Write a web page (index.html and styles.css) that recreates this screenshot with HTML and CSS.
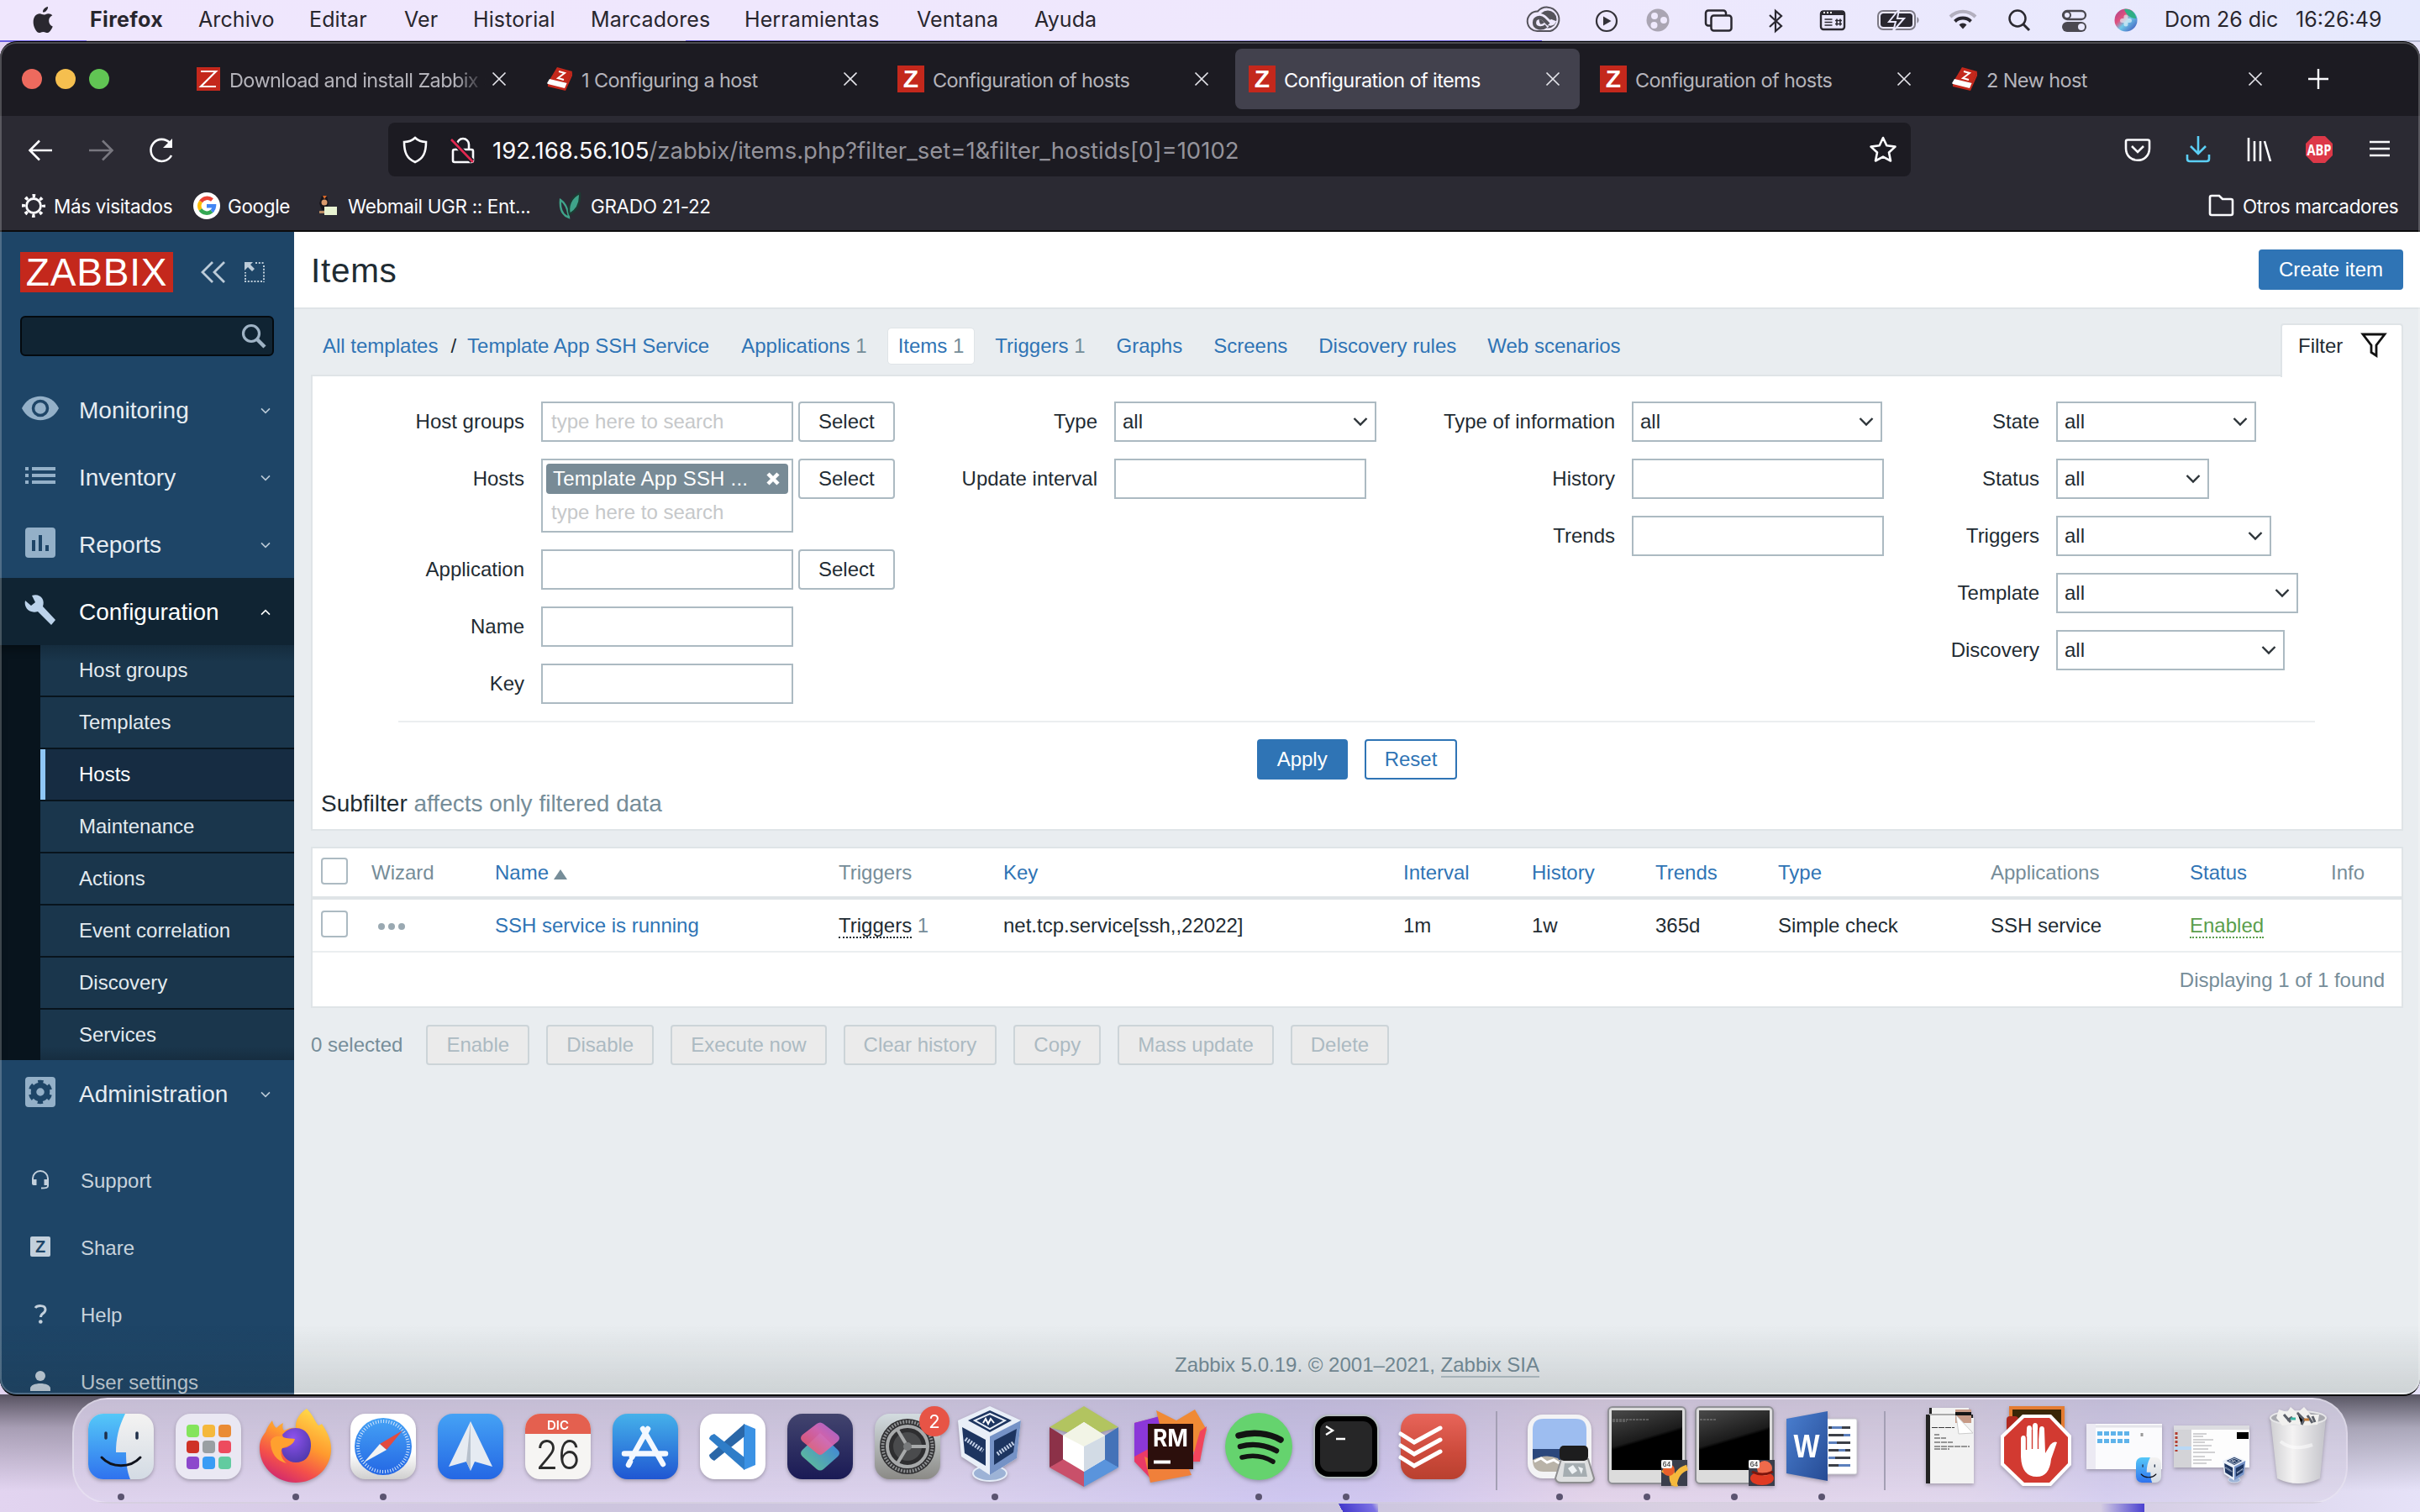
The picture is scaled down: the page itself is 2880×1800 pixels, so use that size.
FILE: index.html
```html
<!DOCTYPE html>
<html lang="es">
<head>
<meta charset="utf-8">
<title>Configuration of items</title>
<link rel="stylesheet" href="styles.css">
</head>
<body>
<svg class="defs" width="0" height="0" aria-hidden="true">
  <defs>
    <linearGradient id="gBlue" x1="0" y1="0" x2="0" y2="1"><stop offset="0" stop-color="#55c8f8"/><stop offset="1" stop-color="#2f72ee"/></linearGradient>
    <linearGradient id="gWhite" x1="0" y1="0" x2="0" y2="1"><stop offset="0" stop-color="#f4f3f2"/><stop offset="1" stop-color="#d3dbe4"/></linearGradient>
    <linearGradient id="gSky" x1="0" y1="0" x2="0" y2="1"><stop offset="0" stop-color="#45a2f5"/><stop offset="1" stop-color="#2467e4"/></linearGradient>
    <linearGradient id="gStore" x1="0" y1="0" x2="0" y2="1"><stop offset="0" stop-color="#45b1ea"/><stop offset="1" stop-color="#1f56d2"/></linearGradient>
    <linearGradient id="gSaf" x1="0" y1="0" x2="0" y2="1"><stop offset=".6" stop-color="#fff"/><stop offset="1" stop-color="#cfcfcf"/></linearGradient>
    <linearGradient id="gNight" x1="0" y1="0" x2="0" y2="1"><stop offset="0" stop-color="#42446e"/><stop offset="1" stop-color="#1a1a55"/></linearGradient>
    <linearGradient id="gSc1" x1="0" y1="1" x2="1" y2="0"><stop offset="0" stop-color="#f2555a"/><stop offset=".6" stop-color="#e069b8"/><stop offset="1" stop-color="#a76ae0"/></linearGradient>
    <linearGradient id="gSc2" x1="0" y1="1" x2="1" y2="0"><stop offset="0" stop-color="#6ad695"/><stop offset="1" stop-color="#3b82f6"/></linearGradient>
    <linearGradient id="gFox" x1=".8" y1="0" x2=".3" y2="1"><stop offset="0" stop-color="#ffe14d"/><stop offset=".45" stop-color="#ff9a2e"/><stop offset=".75" stop-color="#f4504a"/><stop offset="1" stop-color="#d0286f"/></linearGradient>
    <radialGradient id="gFoxIn" cx=".4" cy=".3" r=".8"><stop offset="0" stop-color="#8f52ee"/><stop offset="1" stop-color="#4a37a6"/></radialGradient>
    <linearGradient id="gSet" x1="0" y1="0" x2="0" y2="1"><stop offset="0" stop-color="#d3dce0"/><stop offset="1" stop-color="#8b8a86"/></linearGradient>
    <linearGradient id="gTodo" x1="0" y1="0" x2="0" y2="1"><stop offset="0" stop-color="#e8655a"/><stop offset=".6" stop-color="#cc4a3b"/><stop offset="1" stop-color="#b9402f"/></linearGradient>
    <linearGradient id="gWord" x1="0" y1="0" x2="1" y2="1"><stop offset="0" stop-color="#4a7fd0"/><stop offset="1" stop-color="#264b94"/></linearGradient>
    <linearGradient id="gTerm" x1="0" y1="0" x2=".35" y2="1"><stop offset="0" stop-color="#4a4a4a"/><stop offset=".55" stop-color="#1b1b1b"/><stop offset=".6" stop-color="#000"/></linearGradient>
    <linearGradient id="gTrash" x1="0" y1="0" x2="1" y2="0"><stop offset="0" stop-color="#cfcfd2"/><stop offset=".4" stop-color="#f4f3f3"/><stop offset="1" stop-color="#c4c4ca"/></linearGradient>
    <linearGradient id="gSiri" x1="0" y1="0" x2="1" y2="1"><stop offset="0" stop-color="#a5418b"/><stop offset=".35" stop-color="#e0507e"/><stop offset=".55" stop-color="#6ec9e8"/><stop offset="1" stop-color="#3a47b8"/></linearGradient>
  </defs>
  <symbol id="x" viewBox="0 0 20 20"><path d="M2.500 2.500 17.500 17.500M17.500 2.500 2.500 17.500" fill="none" stroke="currentColor" stroke-width="1.700"/></symbol>
  <symbol id="chev" viewBox="0 0 18 12"><path d="M1.500 2 9 9.500 16.500 2" fill="none" stroke="currentColor" stroke-width="2.400"/></symbol>
  <symbol id="zfav" viewBox="0 0 32 32"><rect width="32" height="32" fill="#c4281c"/><text x="15.500" y="26" text-anchor="middle" font-family="Liberation Sans, sans-serif" font-weight="bold" font-size="30" fill="#fff">Z</text></symbol>
  <symbol id="book" viewBox="0 0 32 32"><path d="M13 2 31 7 25 21 4 17Z" fill="#c4281c"/><path d="M4 16 25 21 26 22 22 28 4 24 1 21Z" fill="#fff"/><path d="M25 20 31 7 31 12 23 30 2 25 2 22 22 27Z" fill="#c4281c"/><path d="M15 7l7 2-8 6 7 2" fill="none" stroke="#fff" stroke-width="2"/></symbol>
  <symbol id="finder" viewBox="0 0 78 78"><rect width="78" height="78" rx="18" fill="url(#gWhite)"/><path d="M18 0h26c-8 16-11 30-11 46h12c0 12 1 22 5 32H18A18 18 0 0 1 0 60V18A18 18 0 0 1 18 0Z" fill="url(#gBlue)"/><path d="M21 23v6M58 23v6" stroke="#20304a" stroke-width="3.500" stroke-linecap="round"/><path d="M16 52c12 13 34 13 46 0" fill="none" stroke="#10131c" stroke-width="3" stroke-linecap="round"/></symbol>
  <symbol id="vbox" viewBox="0 0 76 92"><ellipse cx="38" cy="80" rx="20" ry="9" fill="#9db3d6" stroke="#e5ecf7" stroke-width="2"/><path d="M38 0 75 17 70 62 38 82 4 60 0 17Z" fill="#e9eff8"/><path d="M75 17 38 36V82L70 62Z" fill="#7592c6"/><path d="M38 5 64 17 38 31 12 17Z" fill="#1d3560"/><path d="M38 9 56 17 38 27 20 17Z" fill="none" stroke="#e9eff8" stroke-width="2"/><path d="M30 20l3-5 3 6 3-6 4 5" fill="none" stroke="#fff" stroke-width="2"/><path d="M5 25 33 40V71L8 56Z" fill="#1d3560"/><path d="M43 41 70 27 66 55 43 70Z" fill="#1d3560"/><path d="M9 39 30 53M47 57 66 44" stroke="#c5d2e8" stroke-width="5" stroke-dasharray="2 1.500"/></symbol>
</svg>

<header class="menubar">
  <svg class="apple" viewBox="0 0 30 36"><path d="M20.500 1c.3 3.800-3.200 7.500-6.600 7.300C13.500 4.900 17 1.300 20.500 1ZM26.300 12.200c-3 1.800-4.700 4-4.600 7.300.1 3.300 2 5.800 5 7.100-1.500 4-4.400 8.400-7.200 8.400-1.900 0-2.700-1.200-5.100-1.200S11 35 9.300 35C5.500 35 1.500 27.300 1.500 21c0-7 4-10.900 8.200-10.900 2.200 0 3.800 1.400 5.600 1.400 1.700 0 3.200-1.500 5.800-1.500 2 0 4 .9 5.200 2.200Z" fill="#2a2830"/></svg>
  <nav class="menus"><b>Firefox</b><span>Archivo</span><span>Editar</span><span>Ver</span><span>Historial</span><span>Marcadores</span><span>Herramientas</span><span>Ventana</span><span>Ayuda</span></nav>
  <div class="tray">
    <svg width="74" height="48" viewBox="0 0 74 48"><path d="M30 13.500A14.500 14.500 0 1 1 45 37H31A11.800 11.800 0 1 1 30 13.500Z" fill="none" stroke="#55535b" stroke-width="2"/><circle cx="42" cy="23" r="10.500" fill="#55535b"/><path d="M41 29c-5 5-15 5-15-3 0-6 7-9 12-4l4 4q5 3 7-2" fill="none" stroke="#efe9fd" stroke-width="7"/><path d="M40 31c-5 4-14 3-14-4 0-6 7-8 11-4l6 6" fill="none" stroke="#55535b" stroke-width="4.200"/></svg>
    <svg width="68" height="48" viewBox="0 0 68 48"><circle cx="38" cy="25" r="12" fill="none" stroke="#333138" stroke-width="2.200"/><path d="M34 19.500 43.500 25 34 30.500Z" fill="#333138"/></svg>
    <svg width="66" height="48" viewBox="0 0 66 48"><circle cx="31" cy="24" r="13.500" fill="#aaa5b3"/><circle cx="27" cy="19" r="4" fill="#efe9fd"/><circle cx="38" cy="24" r="4" fill="#efe9fd"/><circle cx="26.500" cy="30" r="4" fill="#efe9fd"/></svg>
    <svg width="72" height="48" viewBox="0 0 72 48" fill="#ede9fd" stroke="#2a2830" stroke-width="2.500"><rect x="22" y="12.500" width="24" height="18" rx="3"/><rect x="28.500" y="18.500" width="24" height="18" rx="3"/></svg>
    <svg width="68" height="48" viewBox="0 0 68 48" fill="none" stroke="#2a2830" stroke-width="2.200"><path d="M26 18 40 31 33 37V13L40 19 26 32"/></svg>
    <svg width="74" height="48" viewBox="0 0 74 48"><rect x="19" y="13.500" width="28" height="21.500" rx="3" fill="none" stroke="#2a2830" stroke-width="2.400"/><path d="M19 13h28v5H19Z" fill="#2a2830"/><path d="M22 15h11" stroke="#fff" stroke-width="2" stroke-dasharray="2 2"/><path d="M23.500 23h9M23.500 26.500h9M23.500 30h9M36 24.500h8M36 28.500h8M38 22.500v8M42 22.500v8" stroke="#2a2830" stroke-width="1.600"/></svg>
    <svg width="80" height="48" viewBox="0 0 80 48"><rect x="13" y="13" width="44" height="22" rx="6" fill="none" stroke="#7d7a85" stroke-width="2"/><rect x="16" y="16" width="38" height="16" rx="3.500" fill="#2a2830"/><path d="M59.500 20v8a5 5 0 0 0 0-8Z" fill="#7d7a85"/><path d="M38 11 26 26h8l-3 11 13-15h-8Z" fill="#2a2830" stroke="#ebe9fd" stroke-width="2"/></svg>
    <svg width="70" height="48" viewBox="0 0 70 48" fill="none" stroke-width="4"><path d="M19 20a21 21 0 0 1 30 0" stroke="#b3b0bf"/><path d="M24.500 25.500a13.500 13.500 0 0 1 19 0" stroke="#2a2830"/><path d="M34 34.500 29.500 29.500a6 6 0 0 1 9 0Z" fill="#2a2830"/></svg>
    <svg width="66" height="48" viewBox="0 0 66 48" fill="none" stroke="#2a2830" stroke-width="2.500"><circle cx="29" cy="22" r="9.500"/><path d="M36 29 43 36" stroke-width="3"/></svg>
    <svg width="64" height="48" viewBox="0 0 64 48"><rect x="17" y="13" width="27" height="10" rx="5" fill="none" stroke="#4a4850" stroke-width="2.300"/><circle cx="22" cy="18" r="4" fill="none" stroke="#4a4850" stroke-width="2"/><rect x="16" y="26" width="29" height="12" rx="6" fill="#4a4850"/><circle cx="39" cy="32" r="4" fill="#eae9fd"/></svg>
    <svg width="60" height="48" viewBox="0 0 60 48"><circle cx="28" cy="24" r="13.500" fill="url(#gSiri)"/><path d="M26 11c8-1 13 4 14.500 11-7 0-12-4-14.500-11Z" fill="#2fae84"/><path d="M28 20v9M23.500 24.500h9" stroke="#fff" stroke-width="5" stroke-linecap="round" opacity=".55"/></svg>
  </div>
  <span class="date">Dom 26 dic</span><span class="time">16:26:49</span>
</header>

<main class="window">
  <div class="tabbar">
    <div class="lights"><i class="r"></i><i class="y"></i><i class="g"></i></div>
    <div class="tab"><svg class="fav small" viewBox="0 0 28 28"><rect width="28" height="28" fill="#c4281c"/><path d="M5 5h18L5 23h18" fill="none" stroke="#fff" stroke-width="2.200"/></svg><span class="ttl t1">Download and install Zabbix 5.0</span><svg class="cls"><use href="#x"/></svg></div>
    <div class="tab"><svg class="fav"><use href="#book"/></svg><span class="ttl">1 Configuring a host</span><svg class="cls"><use href="#x"/></svg></div>
    <div class="tab"><svg class="fav"><use href="#zfav"/></svg><span class="ttl">Configuration of hosts</span><svg class="cls"><use href="#x"/></svg></div>
    <div class="tab on"><svg class="fav"><use href="#zfav"/></svg><span class="ttl">Configuration of items</span><svg class="cls"><use href="#x"/></svg></div>
    <div class="tab"><svg class="fav"><use href="#zfav"/></svg><span class="ttl">Configuration of hosts</span><svg class="cls"><use href="#x"/></svg></div>
    <div class="tab"><svg class="fav"><use href="#book"/></svg><span class="ttl">2 New host</span><svg class="cls"><use href="#x"/></svg></div>
    <svg class="plus" viewBox="0 0 26 26"><path d="M13 1v24M1 13h24" stroke="#fbfbfe" stroke-width="2.400"/></svg>
  </div>
  <div class="navbar">
    <svg width="72" height="80" viewBox="0 0 72 80" fill="none" stroke="#fbfbfe" stroke-width="2.600"><path d="M62 41H36M47 29.500 35.500 41 47 52.500"/></svg>
    <svg width="72" height="80" viewBox="0 0 72 80" fill="none" stroke="#78777f" stroke-width="2.600"><path d="M34 41H61M50 29.500 61.500 41 50 52.500"/></svg>
    <svg width="72" height="80" viewBox="0 0 72 80" fill="none" stroke="#fbfbfe" stroke-width="2.600"><path d="M60 47a13 13 0 1 1-2-15"/><path d="M61 27v11H50Z" fill="#fbfbfe" stroke="none"/></svg>
    <div class="urlbar">
      <svg width="64" height="64" viewBox="0 0 64 64" fill="none" stroke="#fbfbfe" stroke-width="2.600"><path d="M32 18c4 4 8 5 13 5 0 12-3 20-13 24-10-4-13-12-13-24 5 0 9-1 13-5Z"/></svg>
      <svg width="60" height="64" viewBox="0 0 60 64" fill="none" stroke="#fbfbfe" stroke-width="2.600"><path d="M15 32h20a2 2 0 0 1 2 2v11a2 2 0 0 1-2 2H15a2 2 0 0 1-2-2V34a2 2 0 0 1 2-2ZM18 32v-6a7 7 0 0 1 14 0v6"/><path d="M10 19 36 46" stroke="#1c1b22" stroke-width="6"/><path d="M11 20 37 47" stroke="#e22850"/></svg>
      <span class="url"><b>192.168.56.105</b>/zabbix/items.php?filter_set=1&amp;filter_hostids[0]=10102</span>
      <svg class="star" viewBox="0 0 34 34" fill="none" stroke="#fbfbfe" stroke-width="2.600" stroke-linejoin="round"><path d="M17 3 21.300 12.300 31.500 13.600 24 20.500 26 30.500 17 25.600 8 30.500 10 20.500 2.500 13.600 12.700 12.300Z"/></svg>
    </div>
    <div class="tools">
      <svg viewBox="0 0 72 64" fill="none" stroke="#fbfbfe" stroke-width="2.600"><path d="M24 20.500h24a2 2 0 0 1 2 2v8c0 19-28 19-28 0v-8a2 2 0 0 1 2-2ZM29 28l7 7 7-7"/></svg>
      <svg viewBox="0 0 72 64" fill="none" stroke="#5bcff5" stroke-width="2.600"><path d="M36 16v21M27 28l9 9 9-9M23 38v5q0 3 3 3h20q3 0 3-3v-5"/></svg>
      <svg viewBox="0 0 72 64" fill="none" stroke="#fbfbfe" stroke-width="2.600"><path d="M24 18v28M31 22v24M38 22v24M43 22l7 24"/></svg>
      <svg viewBox="0 0 72 64"><path d="M29 16h14l9 9v14l-9 9H29l-9-9V25Z" fill="#dd3848"/><text x="36" y="38.500" text-anchor="middle" font-family="Open Sans, Liberation Sans, sans-serif" font-weight="bold" font-size="17" fill="#fff" textLength="29" lengthAdjust="spacingAndGlyphs">ABP</text></svg>
      <svg viewBox="0 0 72 64" stroke="#fbfbfe" stroke-width="2.600"><path d="M24 23h24M24 31h24M24 39h24"/></svg>
    </div>
  </div>
  <div class="bookmarks">
    <svg width="32" height="32" viewBox="0 0 32 32" fill="none" stroke="#fbfbfe"><circle cx="16" cy="16" r="8.500" stroke-width="2.800"/><circle cx="16" cy="16" r="12" stroke-width="4" stroke-dasharray="3.600 5.820" stroke-dashoffset="1.800"/></svg><span class="b1">Más visitados</span>
    <svg width="32" height="32" viewBox="0 0 32 32"><circle cx="16" cy="16" r="16" fill="#fff"/><g fill="none" stroke-width="4.500"><path d="M9 11a9 9 0 0 1 13.500-2" stroke="#ea4335"/><path d="M8.500 20.500a9 9 0 0 1 .5-9.500" stroke="#fbbc05"/><path d="M22 22.500A9 9 0 0 1 8.500 20.500" stroke="#34a853"/><path d="M16 16.200h9a9 9 0 0 1-3 6.300" stroke="#4285f4"/></g></svg><span class="b2">Google</span>
    <svg width="32" height="32" viewBox="0 0 32 32"><path d="M11 4h6l2 9-2 8h-6l-3-8Z" fill="#17151b"/><circle cx="14" cy="12" r="3.500" fill="#d99a6c"/><path d="M12 4l2 4 3-4" fill="#d8682a"/><rect x="14" y="17" width="15" height="10" fill="#e9f3d2"/><path d="M8 22h6v3H8Z" fill="#b88a62"/></svg><span class="b3">Webmail UGR :: Ent...</span>
    <svg width="32" height="32" viewBox="0 0 32 32" fill="none" stroke="#3fa48a" stroke-width="2.400"><path d="M15 30C7 27 4 20 5 9c6 4 9 10 10 21Z"/><path d="M16 26c-3-9 1-20 12-25 1 12-3 20-12 25Z" fill="#3fa48a" stroke="#1d3b33"/></svg><span class="b4">GRADO 21-22</span>
    <svg class="folder" width="32" height="32" viewBox="0 0 32 32" fill="none" stroke="#fbfbfe" stroke-width="2.600"><path d="M4 4h9l4 4h10a2 2 0 0 1 2 2v15a2 2 0 0 1-2 2H4a2 2 0 0 1-2-2V6a2 2 0 0 1 2-2Z"/></svg><span class="b5">Otros marcadores</span>
  </div>

  <div class="page">
    <aside class="side">
      <div class="brand"><span class="logo">ZABBIX</span>
        <svg width="30" height="28" viewBox="0 0 30 28" fill="none" stroke="#bccbd8" stroke-width="2.800"><path d="M14 2 2 14 14 26M28 2 16 14 28 26"/></svg>
        <svg class="kiosk" width="26" height="26" viewBox="0 0 26 26"><path d="M14 2h11M24 5v20M22 24H1M2 22v-9" fill="none" stroke="#bccbd8" stroke-width="2" stroke-dasharray="2 1.800"/><path d="M1 1h10L8 4l5 5-3 3-5-5-4 4Z" fill="#bccbd8"/></svg>
      </div>
      <div class="search"><svg width="30" height="30" viewBox="0 0 30 30" fill="none" stroke="#9fb3c5" stroke-width="3.200"><circle cx="12" cy="12" r="9.500"/><path d="M19 19 28 28" stroke-width="4.500"/></svg></div>
      <nav>
        <div class="mi"><svg viewBox="0 0 44 40"><path d="M0 20C9 1 35 1 44 20 35 39 9 39 0 20Z" fill="#94b0c8"/><circle cx="22" cy="20" r="8.500" fill="none" stroke="#1e4567" stroke-width="3.500"/></svg><span>Monitoring</span><svg class="ch"><use href="#chev"/></svg></div>
        <div class="mi"><svg viewBox="0 0 44 40"><path d="M4 12h4M12 12h28M4 20h4M12 20h28M4 28h4M12 28h28" stroke="#94b0c8" stroke-width="3.800"/></svg><span>Inventory</span><svg class="ch"><use href="#chev"/></svg></div>
        <div class="mi"><svg viewBox="0 0 44 40"><rect x="4" y="2" width="36" height="36" rx="4" fill="#94b0c8"/><path d="M14 17v13M22 11v19M30 23v7" stroke="#1e4567" stroke-width="4"/></svg><span>Reports</span><svg class="ch"><use href="#chev"/></svg></div>
        <div class="mi open"><svg viewBox="0 0 44 40"><path d="M4 9l7 6 5-4-4-8C22 0 28 8 25 16L40 32l-5 6-16-16C9 25 2 17 4 9Z" fill="#bcd3eb"/></svg><span>Configuration</span><svg class="ch up"><use href="#chev"/></svg></div>
        <div class="sub"><a>Host groups</a><a>Templates</a><a class="sel">Hosts</a><a>Maintenance</a><a>Actions</a><a>Event correlation</a><a>Discovery</a><a>Services</a></div>
        <div class="mi"><svg viewBox="0 0 44 40"><rect x="4" y="2" width="36" height="36" rx="4" fill="#94b0c8"/><circle cx="22" cy="20" r="8" fill="none" stroke="#1e4567" stroke-width="6.500"/><circle cx="22" cy="20" r="12" fill="none" stroke="#1e4567" stroke-width="4.500" stroke-dasharray="6.200 6.366" stroke-dashoffset="9.400"/></svg><span>Administration</span><svg class="ch"><use href="#chev"/></svg></div>
      </nav>
      <div class="foot">
        <div class="fi"><svg viewBox="0 0 24 24"><path d="M3 15V11a9 9 0 0 1 18 0v9q0 2.500-8 2.500" fill="none" stroke="#c3d0dc" stroke-width="2"/><path d="M2 12h5.500v7H4q-2 0-2-2ZM22 12h-5.500v7H20q2 0 2-2Z" fill="#c3d0dc"/></svg><span>Support</span></div>
        <div class="fi"><svg viewBox="0 0 24 24"><rect width="24" height="24" rx="2" fill="#c3d0dc"/><text x="12" y="19" text-anchor="middle" font-family="Liberation Sans, sans-serif" font-weight="bold" font-size="20" fill="#1e4567">Z</text></svg><span>Share</span></div>
        <div class="fi"><svg viewBox="0 0 24 24"><path d="M6 5c2-3 12-4 12 2 0 5-5.500 4-5.500 9" fill="none" stroke="#c3d0dc" stroke-width="3"/><circle cx="12.300" cy="21.500" r="2.300" fill="#c3d0dc"/></svg><span>Help</span></div>
        <div class="fi"><svg viewBox="0 0 24 24"><circle cx="12" cy="6" r="6" fill="#c3d0dc"/><path d="M0 24v-3c0-8 24-8 24 0v3Z" fill="#c3d0dc"/></svg><span>User settings</span></div>
      </div>
    </aside>

    <section class="content">
      <div class="head"><h1>Items</h1><a class="btn solid">Create item</a></div>
      <div class="crumbs">
        <a>All templates</a><i>/</i><a class="tpl">Template App SSH Service</a>
        <a class="lk">Applications <em>1</em></a><a class="lk cur">Items <em>1</em></a><a class="lk">Triggers <em>1</em></a><a class="lk">Graphs</a><a class="lk">Screens</a><a class="lk">Discovery rules</a><a class="lk">Web scenarios</a>
        <div class="ftab">Filter<svg width="32" height="32" viewBox="0 0 32 32" fill="none" stroke="#111" stroke-width="2.800"><path d="M3 3h26L19 16v12.500L13 24.500V16Z"/></svg></div>
      </div>
      <div class="filter">
        <div class="cols">
          <div class="col c1">
            <label>Host groups</label><div class="f"><span class="in ph">type here to search</span><a class="btn">Select</a></div>
            <label>Hosts</label><div class="f"><span class="multi"><span class="chip">Template App SSH ...<svg viewBox="0 0 18 18"><path d="M3 3 15 15M15 3 3 15" stroke="#fff" stroke-width="4.500"/></svg></span><span class="ph">type here to search</span></span><a class="btn">Select</a></div>
            <label>Application</label><div class="f"><span class="in"></span><a class="btn">Select</a></div>
            <label>Name</label><div class="f"><span class="in"></span></div>
            <label>Key</label><div class="f"><span class="in"></span></div>
          </div>
          <div class="col c2">
            <label>Type</label><span class="sl w312">all<svg><use href="#chev"/></svg></span>
            <label>Update interval</label><span class="in"></span>
          </div>
          <div class="col c3">
            <label>Type of information</label><span class="sl w298">all<svg><use href="#chev"/></svg></span>
            <label>History</label><span class="in"></span>
            <label>Trends</label><span class="in"></span>
          </div>
          <div class="col c4">
            <label>State</label><span class="sl w238">all<svg><use href="#chev"/></svg></span>
            <label>Status</label><span class="sl w182">all<svg><use href="#chev"/></svg></span>
            <label>Triggers</label><span class="sl w256">all<svg><use href="#chev"/></svg></span>
            <label>Template</label><span class="sl w288">all<svg><use href="#chev"/></svg></span>
            <label>Discovery</label><span class="sl w272">all<svg><use href="#chev"/></svg></span>
          </div>
        </div>
        <div class="acts"><a class="btn solid">Apply</a><a class="btn line">Reset</a></div>
        <p class="subf">Subfilter <em>affects only filtered data</em></p>
      </div>

      <div class="table">
        <div class="tr th"><span class="cb"><i></i></span><span>Wizard</span><span><a>Name</a><i class="asc"></i></span><span>Triggers</span><a>Key</a><a>Interval</a><a>History</a><a>Trends</a><a>Type</a><span>Applications</span><a>Status</a><span>Info</span></div>
        <div class="tr td"><span class="cb"><i></i></span><span class="dots"><i></i><i></i><i></i></span><a>SSH service is running</a><span><u>Triggers</u> <em>1</em></span><span>net.tcp.service[ssh,,22022]</span><span>1m</span><span>1w</span><span>365d</span><span>Simple check</span><span>SSH service</span><span><u class="ok">Enabled</u></span><span></span></div>
        <div class="tf">Displaying 1 of 1 found</div>
      </div>
      <div class="bulk"><span>0 selected</span><a class="btn">Enable</a><a class="btn">Disable</a><a class="btn">Execute now</a><a class="btn">Clear history</a><a class="btn">Copy</a><a class="btn">Mass update</a><a class="btn">Delete</a></div>
      <footer>Zabbix 5.0.19. © 2001–2021, <u>Zabbix SIA</u></footer>
    </section>
  </div>
</main>

<div class="dock">
  <div class="ap run"><svg viewBox="0 0 104 126"><use href="#finder" x="13" y="19" width="78" height="78"/></svg></div>
  <div class="ap"><svg viewBox="0 0 104 126"><rect x="13" y="19" width="78" height="78" rx="18" fill="#eae8f3"/><g><rect x="26" y="32" width="15" height="15" rx="4" fill="#84e45c"/><rect x="45" y="32" width="15" height="15" rx="4" fill="#f5b83c"/><rect x="64" y="32" width="15" height="15" rx="4" fill="#ea8b35"/><rect x="26" y="51" width="15" height="15" rx="4" fill="#cf3226"/><rect x="45" y="51" width="15" height="15" rx="4" fill="#9a9fa3"/><rect x="64" y="51" width="15" height="15" rx="4" fill="#ed4b5e"/><rect x="26" y="70" width="15" height="15" rx="4" fill="#8c48cc"/><rect x="45" y="70" width="15" height="15" rx="4" fill="#399cf5"/><rect x="64" y="70" width="15" height="15" rx="4" fill="#62cba0"/></g></svg></div>
  <div class="ap run"><svg viewBox="0 0 104 126"><path d="M65 13c8 8 9 14 14 20 3-1 4-2 4-2 8 12 12 22 11 33-2 22-20 37-42 37S10 84 9 62c-1-11 4-17 7-21 2-6 5-10 8-14 1 4 2 7 5 9 2-2 4-4 8-6-1 4-1 7 1 9 6-3 10-4 14-3-1-9 4-17 13-23Z" fill="url(#gFox)"/><path d="M52 36c13 0 19 12 18 22-1 13-8 19-18 19-9 0-17-7-17-17 4 0 10-1 14-8-6 1-12-3-13-8 4-5 9-8 16-8Z" fill="url(#gFoxIn)"/><path d="M22 52c2-6 8-7 13-6 5 3 10 2 16 3-2 8-9 8-15 11-4 6 0 14 5 18-12-3-19-12-19-26Z" fill="#ffa02f"/></svg></div>
  <div class="ap run"><svg viewBox="0 0 104 126"><rect x="13" y="19" width="78" height="78" rx="18" fill="url(#gSaf)"/><circle cx="52" cy="58" r="34" fill="url(#gSky)"/><circle cx="52" cy="58" r="30" fill="none" stroke="#d5e6fb" stroke-width="4" stroke-dasharray="1 2.140"/><path d="M75 39 48 55 56 62Z" fill="#e34b3f"/><path d="M48 55 56 62 29 77Z" fill="#f3f3f3"/></svg></div>
  <div class="ap"><svg viewBox="0 0 104 126"><rect x="13" y="19" width="78" height="78" rx="18" fill="url(#gSky)"/><path d="M52 28 78 82 57 76 52 87 47 76 26 82Z" fill="#e6ebf2"/><path d="M52 28V87L47 76Z" fill="#b7c0cc"/></svg></div>
  <div class="ap"><svg viewBox="0 0 104 126"><rect x="13" y="19" width="78" height="78" rx="18" fill="#f6f5f3"/><path d="M13 43V37A18 18 0 0 1 31 19H73A18 18 0 0 1 91 37V43Z" fill="#e4604f"/><text x="52" y="38" text-anchor="middle" font-family="Inter, sans-serif" font-weight="600" font-size="15" fill="#fff">DIC</text><text x="52" y="85" text-anchor="middle" font-family="Inter, sans-serif" font-weight="300" font-size="48" fill="#2b2b2b" textLength="53" lengthAdjust="spacingAndGlyphs">26</text></svg></div>
  <div class="ap"><svg viewBox="0 0 104 126"><rect x="13" y="19" width="78" height="78" rx="18" fill="url(#gStore)"/><path d="M55 37 36 71M49 37 73 79M27 66.500H76M34 76l-2 4" stroke="#f3f8ff" stroke-width="6.500" stroke-linecap="round"/></svg></div>
  <div class="ap"><svg viewBox="0 0 104 126"><rect x="13" y="19" width="78" height="78" rx="18" fill="#fff"/><path d="M65 31 79 37V80L65 86Z" fill="#3b92e4"/><path d="M66 31V46L30 75Q24 72 24 68Z" fill="#2a67a8"/><path d="M66 86V71L30 43Q24 45 24 49Z" fill="#2f7dc8"/></svg></div>
  <div class="ap"><svg viewBox="0 0 104 126"><rect x="13" y="19" width="78" height="78" rx="18" fill="url(#gNight)"/><path d="M52 42 73 62Q77 66 73 70L56 85Q52 88 48 85L31 70Q27 66 31 62Z" fill="url(#gSc2)" opacity=".9"/><path d="M56 31 73 44Q77 48 73 52L56 66Q52 70 48 66L31 52Q27 48 31 44L48 31Q52 28 56 31Z" fill="url(#gSc1)" opacity=".88"/></svg></div>
  <div class="ap"><svg viewBox="0 0 104 126"><rect x="13" y="19" width="78" height="78" rx="18" fill="url(#gSet)"/><circle cx="52" cy="58" r="33" fill="#2e2e30"/><circle cx="52" cy="58" r="29.500" fill="none" stroke="#8e9092" stroke-width="4" stroke-dasharray="2 1.500"/><circle cx="52" cy="58" r="24" fill="none" stroke="#a7a9aa" stroke-width="4"/><circle cx="52" cy="58" r="17" fill="#4a4b4d"/><path d="M52 58H75M52 58 40 38M52 58 40 78" stroke="#a7a9aa" stroke-width="4"/><circle cx="52" cy="58" r="5" fill="#77797b"/><circle cx="84" cy="28" r="18" fill="#e75446"/><text x="84" y="36" text-anchor="middle" font-family="Inter, sans-serif" font-size="22" fill="#fff">2</text></svg></div>
  <div class="ap run"><svg viewBox="0 0 104 126"><use href="#vbox" x="8" y="10" width="76" height="92"/></svg></div>
  <div class="ap shift"><svg viewBox="0 0 104 126"><path d="M52 10 93 35 69 42 52 29 35 42 11 35Z" fill="#b2c460"/><path d="M11 35 27 45V75L11 83Z" fill="#8c3148"/><path d="M93 35 77 45V75L93 83Z" fill="#4472b8"/><path d="M11 83 28 73 52 87V106Z" fill="#c9506a"/><path d="M93 83 76 73 52 87V106Z" fill="#5a94dc"/><path d="M52 29 77 45V73L52 88 27 73V45Z" fill="#fff"/><path d="M52 29 77 45 52 58 27 45Z" fill="#f2f4e6"/><path d="M77 45V73L52 88V58Z" fill="#d2dbe5"/></svg></div>
  <div class="ap"><svg viewBox="0 0 104 126"><path d="M8 30 40 22 60 50 27 96 8 76Z" fill="#e93a67"/><path d="M8 30 38 22 45 50 8 70Z" fill="#8b37d8"/><path d="M34 15 58 27 80 14 94 38 86 66 60 60 40 40Z" fill="#f08a35"/><path d="M20 70 40 80 70 78 76 92 27 101Z" fill="#f0803a"/><path d="M86 40 94 34 86 76H76Z" fill="#f1455c"/><rect x="24" y="31" width="54" height="54" fill="#2c0f0c"/><text x="30" y="58" font-family="Inter, sans-serif" font-weight="bold" font-size="28" fill="#fff" textLength="42" lengthAdjust="spacingAndGlyphs">RM</text><path d="M31 76.500H51" stroke="#fff" stroke-width="4"/></svg></div>
  <div class="ap run"><svg viewBox="0 0 104 126"><circle cx="52" cy="58" r="40" fill="#65d36e"/><g fill="none" stroke="#121412" stroke-linecap="round"><path d="M28 45c17-5 36-3 50 5" stroke-width="7.500"/><path d="M30 58c14-4 30-2 43 5" stroke-width="6.500"/><path d="M32 71c12-3 25-2 37 5" stroke-width="5.500"/></g></svg></div>
  <div class="ap run"><svg viewBox="0 0 104 126"><rect x="13" y="20" width="78" height="76" rx="18" fill="#b5bcc0"/><rect x="15" y="22" width="74" height="72" rx="16" fill="#000"/><rect x="21" y="28" width="62" height="60" rx="11" fill="#262627"/><path d="M28 34l8 5-8 5M40 49h11" fill="none" stroke="#fff" stroke-width="2.400"/></svg></div>
  <div class="ap"><svg viewBox="0 0 104 126"><rect x="13" y="19" width="78" height="78" rx="18" fill="url(#gTodo)"/><path d="M13 43 29 53 60 36M13 57 29 67 60 50M13 71 29 81 60 64" fill="none" stroke="#fff" stroke-width="5" stroke-linecap="round"/></svg></div>
  <i class="sep"></i>
  <div class="ap run"><svg viewBox="0 0 104 126"><rect x="14" y="20" width="76" height="76" rx="18" fill="#f3f3f5"/><path d="M20 61V38q0-13 13-13H71q13 0 13 13V61Z" fill="#9dbdf0"/><path d="M20 61H84V74H20Z" fill="#2b477c"/><path d="M20 74q15-8 30-2l10 16H33q-13 0-13-14Z" fill="#b9b3a8"/><path d="M22 76l8-4 7 5 8-3 10 6" stroke="#fff" stroke-width="3" fill="none"/><path d="M54 73H86L93 96Q92 101 86 101H54Q48 101 47 96Z" fill="#dedfe0" stroke="#8e8e90" stroke-width="2"/><path d="M58 78 82 78 85 94H56Z" fill="#a5adb1"/><path d="M62 84l6-4 5 7-6 4ZM74 82l6 2-2 7" fill="#eef2f4"/><rect x="52" y="57" width="34" height="18" rx="5" fill="#1d1d1e"/></svg></div>
  <div class="ap run"><svg viewBox="0 0 104 126"><rect x="6" y="11" width="92" height="91" rx="5" fill="#dcdcdc" stroke="#909096" stroke-width="2"/><rect x="10" y="15" width="84" height="71" fill="url(#gTerm)"/><path d="M11 26H55M11 28H28" stroke="#888" stroke-width="1" stroke-dasharray="3 1"/><rect x="69" y="74" width="31" height="31" fill="#3a3e4b"/><path d="M72 90q8-12 10 2q0 12 6 10M84 105q2-18 16-22" stroke="#f5b93c" stroke-width="7" fill="none"/><circle cx="78" cy="86" r="7" fill="#e9602b"/><rect x="69" y="74" width="13" height="10" rx="2" fill="#f4f4f4"/><text x="75.500" y="82" text-anchor="middle" font-family="Liberation Sans, sans-serif" font-size="8.500" fill="#222">64</text></svg></div>
  <div class="ap run"><svg viewBox="0 0 104 126"><rect x="6" y="11" width="92" height="91" rx="5" fill="#dcdcdc" stroke="#909096" stroke-width="2"/><rect x="10" y="15" width="84" height="71" fill="url(#gTerm)"/><path d="M11 26H30" stroke="#888" stroke-width="1" stroke-dasharray="3 1"/><rect x="69" y="74" width="31" height="31" fill="#3a3e4b"/><ellipse cx="85" cy="96" rx="14" ry="8" fill="#e03a22"/><circle cx="88" cy="84" r="9" fill="#ef6a4b"/><path d="M73 88q12 6 25 0" stroke="#7d150c" stroke-width="3" fill="none"/><rect x="69" y="74" width="13" height="10" rx="2" fill="#f4f4f4"/><text x="75.500" y="82" text-anchor="middle" font-family="Liberation Sans, sans-serif" font-size="8.500" fill="#222">64</text></svg></div>
  <div class="ap run"><svg viewBox="0 0 104 126"><rect x="52" y="25" width="42" height="66" rx="2" fill="#fff" stroke="#c4c4cc" stroke-width="1"/><path d="M60 35.500H86M60 44.500H86M60 53.500H86M60 62.500H86M60 71.500H86M60 80.500H86" stroke="#3c4048" stroke-width="3"/><path d="M64 35.500H76M78 44.500H86M60 53.500H70M72 62.500H80M60 71.500H68M72 80.500H86" stroke="#5c80bd" stroke-width="3"/><path d="M10 25 59 16V99L10 90Z" fill="url(#gWord)"/><text x="34" y="71" text-anchor="middle" font-family="Liberation Sans, sans-serif" font-weight="bold" font-size="38" fill="#fff" textLength="31" lengthAdjust="spacingAndGlyphs">W</text></svg></div>
  <i class="sep s2"></i>
  <div class="ap"><svg viewBox="0 0 104 126"><path d="M28 12H72V20H80V102H24V20H28Z" fill="#232323"/><path d="M31 12H75V24H81V102H29V20H31Z" fill="#f2f2f2"/><path d="M28 20H62" stroke="#aaa" stroke-width="2"/><path d="M59 14H78V30H59Z" fill="#c79a86"/><path d="M59 17H78V21H59Z" fill="#161616"/><path d="M60 21 80 42 63 43Z" fill="#fff" stroke="#ccc"/><path d="M31 35.500H58M34 44H40M34 48H48M34 53H56M34 58H76M34 61H52" stroke="#3b3b3b" stroke-width="1.200" stroke-dasharray="7 1"/></svg></div>
  <div class="ap"><svg viewBox="0 0 104 126"><rect x="21" y="12" width="62" height="40" fill="#3a2606" stroke="#e47c32" stroke-width="4"/><rect x="16" y="22" width="14" height="30" rx="4" fill="#b0281f"/><path d="M35 20H69L93 45V80L69 105H35L9 80V45Z" fill="#fff"/><path d="M37 24H67L89 47V78L67 101H37L13 78V47Z" fill="#d23a31"/><path d="M33 70V49q0-4 3-4t3 4v13l1-25q0-4 3-4t3 4v24l1-27q0-4 3-4t3 4v27l2-23q0-4 3-4t3 4l1 28 6-10q4-5 8-3l-7 20Q67 94 52 94 34 94 33 70Z" fill="#fff"/><path d="M39.500 62V46M46.500 61V38M53.500 61V38" stroke="#d23a31" stroke-width="1.400"/></svg></div>
  <div class="ap"><svg viewBox="0 0 104 126"><rect x="7" y="31" width="90" height="54" fill="#fbfbfd"/><rect x="7" y="31" width="11" height="54" fill="#eceaf3"/><path d="M18 34H97" stroke="#e4e4ea" stroke-width="3"/><path d="M20 42.500H58M20 51.500H58" stroke="#5fb3ea" stroke-width="5" stroke-dasharray="6 2"/><path d="M73 42v4" stroke="#999" stroke-width="3"/><use href="#finder" x="66" y="71" width="30" height="30"/></svg></div>
  <div class="ap"><svg viewBox="0 0 104 126"><rect x="7" y="33" width="90" height="50" fill="#fdfdfd"/><rect x="7" y="33" width="90" height="5" fill="#dcdce0"/><rect x="7" y="38" width="21" height="45" fill="#d3d3d7"/><path d="M10 41v24" stroke="#b33c31" stroke-width="3" stroke-dasharray="3 2"/><rect x="8" y="58" width="20" height="4" fill="#b9d8f5"/><path d="M30 43H46M30 46H42M30 50H54M30 53H44M30 57H52M30 61H48M30 65H56M30 70H44M30 74H52M30 78H46" stroke="#a6a6aa" stroke-width="1"/><rect x="82" y="41" width="14" height="8" fill="#000"/><use href="#vbox" x="64" y="69" width="30" height="33"/></svg></div>
  <div class="ap trash"><svg viewBox="0 0 104 126"><path d="M18 24H84L77 96q-26 12-51 0Z" fill="url(#gTrash)"/><ellipse cx="51" cy="24" rx="33" ry="8" fill="#a9aab0" stroke="#e6e6e8" stroke-width="2"/><path d="M25 24 28 14 38 17 42 11 50 18 58 11 66 20 76 20 74 32 58 33 46 31 32 33Z" fill="#f1f0ee"/><path d="M34 20 42 29M50 18l8 8-3 6M62 21l6 9M44 23l-6 4M68 22l3 7" stroke="#5b5f68" stroke-width="3"/><path d="M42 25h6" stroke="#38b5a2" stroke-width="3"/><path d="M58 26h6" stroke="#c07a3a" stroke-width="3"/><path d="M30 52q14 12 38 4" stroke="#fff" stroke-width="4" opacity=".5" fill="none"/></svg></div>
</div>
</body>
</html>
```
FILE: styles.css
```css
* { box-sizing: border-box; }
html, body { margin: 0; width: 2880px; height: 1800px; overflow: hidden; }
body {
  display: flex; flex-direction: column;
  font-family: Inter, "Liberation Sans", sans-serif;
  background:
    linear-gradient(to right, #6a5fe0 103px, #b9b3cf 103px, #b9b3cf 816px, #5a50c8 816px, #b9b3cf 1300px, #4a3fd0 1835px, #b4b6d0 1835px) 0 0 / 2880px 50px no-repeat,
    linear-gradient(to bottom, transparent 1660px, rgba(40,38,48,.75) 1660px, rgba(60,58,70,.35) 1700px, rgba(80,78,90,0) 1775px),
    linear-gradient(60deg, transparent 50%, #4338cc 50%, #7a70e4 90%, transparent) 1550px 1788px / 90px 12px no-repeat,
    linear-gradient(to right, transparent, #4a40d0) 2500px 1788px / 52px 12px no-repeat,
    linear-gradient(to right, #e2d4f0 0, #cdc5de 700px, #c9c3de 1500px, #d9d0e2 2000px, #d4cce2 2500px, #e6e2f8 2880px);
}
svg { display: block; flex: none; }
.defs { position: absolute; }
a, b, i, em { font-style: normal; }

/* macOS menu bar */
.menubar { height: 48px; margin-bottom: 1px; flex: none; display: flex; align-items: center; background: linear-gradient(to right, #efe6fd, #efe8fd 60%, #e6e9fd); color: #28262e; font-size: 25px; line-height: 48px; white-space: nowrap; }
.apple { width: 28px; height: 33px; margin: -2px 41px 0 38px; }
.menus { display: grid; grid-template-columns: 129px 132px 113px 82px 140px 183px 205px 140px 100px; flex: none; margin-top: -2px; letter-spacing: .1px; }
.menus b { font-weight: 700; letter-spacing: .35px; }
.tray { display: flex; margin-left: auto; }
.date, .time { flex: none; margin-top: -2px; }
.date { width: 156px; margin-left: 14px; }
.time { width: 148px; }

/* Browser window */
.window { position: relative; height: 1613px; flex: none; display: flex; flex-direction: column; border-top: 1px solid #000; border-bottom: 2px solid #0a0a0a; border-radius: 20px; overflow: hidden; background: #1c1b22; }
.window::after { content: ""; position: absolute; inset: 0; border: 2px solid rgba(255,255,255,.22); border-radius: 19px; background: linear-gradient(to bottom, transparent 1525px, rgba(30,40,40,.13)); }
.tabbar { height: 88px; flex: none; display: flex; align-items: center; padding-left: 26px; color: #b5b4bb; font-size: 23.500px; letter-spacing: -.6px; }
.lights { display: flex; gap: 16px; width: 190px; }
.lights i { width: 24px; height: 24px; border-radius: 50%; }
.lights .r { background: #ed6a5e; }
.lights .y { background: #f5bf4f; }
.lights .g { background: #61c554; }
.tab { width: 410px; height: 72px; margin-right: 8px; border-radius: 8px; display: flex; align-items: center; padding: 0 22px 0 16px; flex: none; }
.tab.on { background: #42414d; color: #fbfbfe; }
.fav { width: 32px; height: 32px; margin-right: 10px; }
.fav.small { width: 28px; height: 28px; margin: 0 11px 0 2px; }
.ttl { flex: 1; white-space: nowrap; overflow: hidden; margin-top: 3px; line-height: 34px; }
.t1 { -webkit-mask-image: linear-gradient(to right, #000 88%, transparent); mask-image: linear-gradient(to right, #000 88%, transparent); }
.cls { width: 20px; height: 20px; color: #e4e4ea; }
.t1 + .cls { margin-left: 6px; }
.plus { width: 26px; height: 26px; margin-left: 22px; }
.navbar { height: 80px; flex: none; display: flex; align-items: center; background: #2b2a33; }
.urlbar { width: 1812px; height: 64px; margin-left: 246px; display: flex; align-items: center; background: #1c1b22; border-radius: 8px; padding-right: 16px; flex: none; }
.url { color: #94939b; font-size: 27.500px; white-space: nowrap; margin-top: 1px; }
.url b { color: #fbfbfe; font-weight: 400; }
.star { width: 34px; height: 34px; margin-left: auto; }
.tools { display: flex; margin-left: 234px; }
.tools svg { width: 72px; height: 64px; }
.bookmarks { height: 58px; flex: none; display: flex; align-items: center; background: #2b2a33; border-bottom: 2px solid #0c0c0d; color: #fbfbfe; font-size: 22.500px; letter-spacing: -.35px; padding: 0 0 2px 24px; white-space: nowrap; }
.bookmarks span { flex: none; padding-top: 1px; }
.b1 { width: 166px; margin-left: 8px; }
.b2 { width: 101px; margin-left: 9px; }
.b3 { width: 248px; margin-left: 10px; }
.b4 { margin-left: 9px; }
.folder { margin-left: auto; }
.b5 { width: 211px; margin-left: 9px; }

/* Zabbix frontend */
.page { flex: 1; min-height: 0; display: flex; font-family: "Liberation Sans", Arial, sans-serif; font-size: 24px; color: #1f2c33; }
.side { width: 350px; flex: none; background: #1e4567; overflow: hidden; padding-top: 24px; }
.brand { display: flex; align-items: center; height: 48px; padding-left: 24px; }
.logo { width: 182px; height: 48px; line-height: 49px; text-align: center; background: #c4281c; color: #fff; font-size: 46px; letter-spacing: .8px; margin-right: 33px; }
.kiosk { margin-left: 21px; }
.search { margin: 28px 24px 24px; width: 302px; height: 48px; background: #102433; border: 2px solid #040a0f; border-radius: 6px; display: flex; align-items: center; justify-content: flex-end; padding-right: 7px; }
.mi { height: 80px; display: flex; align-items: center; padding: 0 25px 0 26px; color: #e6ecf1; font-size: 28px; }
.mi span { padding-top: 2px; }
.mi > svg:first-child { width: 44px; height: 40px; margin: -4px 24px 0 0; }
.mi .ch { width: 12px; height: 8px; margin: 2px 3px 0 auto; color: #b9c9d6; }
.mi.open { background: #102433; color: #fff; }
.mi .up { transform: rotate(180deg); color: #fff; }
.sub { background: #08141d; padding-left: 48px; height: 494px; display: flex; flex-direction: column; gap: 2px; box-shadow: inset 0 8px 12px -4px rgba(0,0,0,.4); }
.sub a { height: 60px; line-height: 60px; padding-left: 46px; background: #1a364c; color: #e3eaef; }
.sub a:first-child { background: linear-gradient(#152c3e, #1a364c 20px); }
.sub a:last-child { background: linear-gradient(#1a364c 44px, #162d40); }
.sub .sel { background: #162c42; color: #fff; border-left: 6px solid #8fc7f6; padding-left: 40px; }
.foot { padding-top: 23px; }
.fi { height: 80px; display: flex; align-items: center; padding-left: 36px; color: #c8d3dc; }
.fi span { padding-top: 1px; }
.fi svg { width: 24px; height: 24px; margin: -3px 36px 0 0; overflow: visible; }

.content { width: 2530px; background: #e9edf0; display: flex; flex-direction: column; }
.content a { color: #2f74b5; }
em { color: #768d99; }
.head { height: 92px; background: #fff; border-bottom: 2px solid #dfe4e7; display: flex; justify-content: space-between; align-items: center; padding: 0 20px; flex: none; }
h1 { margin: 2px 0 0; font-size: 40.500px; font-weight: 400; letter-spacing: .7px; }
.btn { height: 48px; line-height: 44px; border: 2px solid #acbac2; border-radius: 4px; background: #fff; padding: 0 22px; flex: none; }
.content .btn { color: #1f2c33; }
.content .btn.solid { background: #2f74b5; border-color: #2f74b5; color: #fff; }
.content .btn.line { border-color: #2f74b5; color: #2f74b5; }
.crumbs { display: flex; align-items: center; height: 80px; margin: 0 20px -2px; padding: 14px 0 6px 14px; white-space: nowrap; flex: none; }
.crumbs i { margin: 0 13px 0 15px; }
.crumbs .tpl { margin-right: 26px; }
.lk { padding: 0 12px; margin-right: 13px; height: 42px; line-height: 42px; }
.lk.cur { background: #fff; border-radius: 4px; box-shadow: 0 0 0 1px #dfe4e7; }
.ftab { position: relative; z-index: 1; align-self: flex-start; margin: 3px 0 0 auto; width: 146px; height: 64px; background: #fff; border: 2px solid #dfe4e7; border-bottom: 0; border-radius: 4px 4px 0 0; display: flex; align-items: flex-start; padding: 8px 17px 0 19px; justify-content: space-between; line-height: 34px; flex: none; }
.filter { margin: 0 20px; height: 543px; background: #fff; border: 2px solid #dfe4e7; padding-top: 30px; flex: none; }
.cols { display: flex; height: 382px; margin: 0 103px 0 102px; border-bottom: 2px solid #ebeef0; }
.col { display: grid; align-content: start; align-items: start; column-gap: 20px; row-gap: 20px; flex: none; }
.c1 { grid-template-columns: 150px 432px; }
.c2 { grid-template-columns: 230px 336px; }
.c3 { grid-template-columns: 260px 300px; }
.c4 { grid-template-columns: 185px 288px; }
label { text-align: right; line-height: 48px; white-space: nowrap; }
.f { display: flex; gap: 6px; }
.in { width: 300px; height: 48px; border: 2px solid #acbac2; background: #fff; line-height: 44px; }
.ph { color: #c6c8ca; padding-left: 10px; }
.multi { width: 300px; height: 88px; border: 2px solid #acbac2; padding: 4px; display: flex; flex-direction: column; line-height: 44px; }
.multi .ph { padding-left: 6px; }
.chip { height: 36px; line-height: 36px; background: #788b96; border-radius: 4px; color: #fff; display: flex; align-items: center; justify-content: space-between; padding: 0 9px 0 8px; flex: none; letter-spacing: .2px; }
.chip svg { width: 18px; height: 18px; }
.sl { height: 48px; border: 2px solid #acbac2; line-height: 44px; padding: 0 8px; display: flex; align-items: center; justify-content: space-between; }
.sl svg { width: 18px; height: 12px; color: #2c3338; }
.w312 { width: 312px; } .w298 { width: 298px; } .w238 { width: 238px; } .w182 { width: 182px; } .w256 { width: 256px; } .w288 { width: 288px; } .w272 { width: 272px; }
.acts { display: flex; justify-content: center; gap: 20px; padding-top: 20px; }
.subf { margin: 12px 0 0 10px; font-size: 28px; line-height: 34px; }
.table { margin: 19px 20px 0; height: 192px; background: #fff; border: 2px solid #dfe4e7; flex: none; }
.tr { display: grid; grid-template-columns: 70px 147px 409px 196px 476px 153px 147px 146px 253px 237px 168px 84px; align-items: center; }
.th { height: 61px; border-bottom: 4px solid #dfe4e7; color: #768d99; }
.td { height: 63px; border-bottom: 2px solid #ebeef0; }
.cb { padding-left: 10px; }
.cb i { display: block; width: 32px; height: 32px; border: 2px solid #acbac2; border-radius: 4px; margin-top: -3px; }
.asc { display: inline-block; margin-left: 6px; border: 8px solid transparent; border-top: 0; border-bottom: 12px solid #768d99; }
.dots { display: flex; gap: 4px; padding: 3px 0 0 8px; }
.dots i { width: 8px; height: 8px; border-radius: 50%; background: #9aa9b2; }
u { text-decoration: none; border-bottom: 2px dotted currentColor; }
.ok { color: #5a9e4c; }
.tf { text-align: right; padding-right: 20px; color: #768d99; line-height: 66px; height: 60px; }
.bulk { display: flex; align-items: center; gap: 20px; padding: 20px 20px 0; color: #768d99; }
.bulk span { margin-right: 8px; }
.bulk .btn { color: #acbac2; background: #ebebeb; border-color: #ccd4d8; }
footer { margin-top: auto; text-align: center; padding-bottom: 20px; color: #768d99; line-height: 30px; }
footer u { border-bottom: 2px solid #b5c1c8; }

/* Dock */
.dock { margin: 2px 0 0 86px; width: 2708px; height: 126px; flex: none; padding-left: 4px; display: flex; align-items: center; border: 2px solid rgba(255,255,255,.28); border-radius: 42px;
  background: linear-gradient(to bottom, rgba(190,184,205,.75), rgba(225,216,240,.55)), linear-gradient(to right, #dccdea 0, #d6cbea 1000px, #b9b2f2 1450px, #bdb3f0 1550px, #e6cfe4 1800px, #e2d6ea 2250px, #c9c4f0 2420px, #dcd9ea 2600px); }
.ap { width: 104px; height: 126px; flex: none; position: relative; }
.ap svg { width: 104px; height: 126px; filter: drop-shadow(0 2px 2px rgba(0,0,0,.25)); }
.shift { margin-left: 2px; }
.run::after { content: ""; position: absolute; left: 48px; top: 114px; width: 8px; height: 8px; border-radius: 50%; background: #5b5470; }
.sep { width: 46px; height: 94px; flex: none; background: linear-gradient(to right, transparent 22px, #a49fb4 22px, #a49fb4 24px, transparent 24px); }
.s2 { width: 48px; }
```
